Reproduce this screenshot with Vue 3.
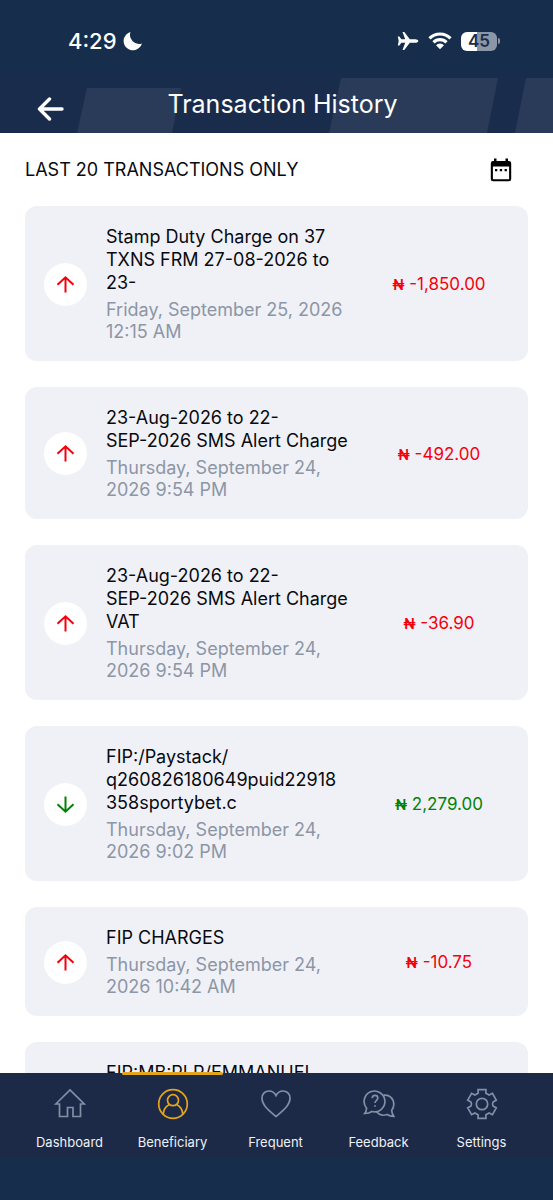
<script setup>
import { ref } from 'vue'

const transactions = [
  { title: 'Stamp Duty Charge on 37\nTXNS FRM 27-08-2026 to\n23-', date: 'Friday, September 25, 2026\n12:15 AM', amount: '-1,850.00', credit: false },
  { title: '23-Aug-2026 to 22-\nSEP-2026 SMS Alert Charge', date: 'Thursday, September 24,\n2026 9:54 PM', amount: '-492.00', credit: false },
  { title: '23-Aug-2026 to 22-\nSEP-2026 SMS Alert Charge\nVAT', date: 'Thursday, September 24,\n2026 9:54 PM', amount: '-36.90', credit: false },
  { title: 'FIP:/Paystack/\nq260826180649puid22918\n358sportybet.c', date: 'Thursday, September 24,\n2026 9:02 PM', amount: '2,279.00', credit: true },
  { title: 'FIP CHARGES', date: 'Thursday, September 24,\n2026 10:42 AM', amount: '-10.75', credit: false },
  { title: 'FIP:MB:PLP/EMMANUEL' }
]

const tabs = [
  {
    label: 'Dashboard',
    paths: ['M1.800 16 16 2 30.200 16H26.500v12.500h-7.500v-9h-5.500v9H5.500V16z']
  },
  {
    label: 'Beneficiary',
    paths: [
      'M16 1.700a14.300 14.300 0 1 0 0 28.600a14.300 14.300 0 1 0 0-28.600z',
      'M16 6.700a5.500 5.500 0 1 0 0 11a5.500 5.500 0 1 0 0-11z',
      'M6.200 26.300C6.600 21 9 18 12.500 16.400M25.800 26.300C25.400 21 23 18 19.500 16.400'
    ]
  },
  {
    label: 'Frequent',
    paths: ['M16 28.500C10 23.500 2 17.500 2 10.300C2 5.800 5.200 3 9 3c3 0 5.500 1.700 7 4.600C17.500 4.700 20 3 23 3c3.800 0 7 2.800 7 7.300C30 17.500 22 23.500 16 28.500z']
  },
  {
    label: 'Feedback',
    paths: [
      'M3.600 20.200A10.400 10.400 0 1 1 8.800 23.500C6.800 24.900 4.400 25.600 1.600 25.500C2.800 24.200 3.500 22.400 3.600 20.200z',
      'M20.600 7.200C26.500 6.300 30.800 10.600 30.800 16.200C30.800 18.500 30 20.600 28.700 22.300C28.800 24.700 29.500 26.800 30.800 28.300C28.200 28.300 26 27.700 24.200 26.500C20 28 15.800 26.600 13.500 23.600',
      'M9.300 10.300C9.300 8.400 10.500 7.400 12 7.400c1.600 0 2.800 1 2.800 2.600c0 2.300-2.800 2.300-2.800 5',
      'M12 17.300v1.500'
    ]
  },
  {
    label: 'Settings',
    paths: [
      'M12.100 1.600H19.900V5.200L23.100 7.100 26.400 5.300 30.300 12.100 27 14.100Q26 16 27 17.900L30.300 19.900 26.400 26.700 23.100 24.900 19.900 26.800V30.400H12.100V26.800L8.900 24.900 5.600 26.700 1.700 19.900 5 17.900Q6 16 5 14.100L1.700 12.100 5.600 5.300 8.900 7.100 12.100 5.200z',
      'M16 10.300a5.700 5.700 0 1 0 0 11.400a5.700 5.700 0 1 0 0-11.400z'
    ]
  }
]

const active = ref('Beneficiary')
</script>

<template>
  <div class="app">
    <header class="top">
      <div class="status">
        <div class="clock">
          <span>4:29</span>
          <svg width="20" height="20" viewBox="0 0 20 20" aria-hidden="true"><path d="M7.500 1A9.300 9.300 0 1 0 18.900 12.400A9 9 0 0 1 7.500 1z" fill="#fff" /></svg>
        </div>
        <div class="signals">
          <svg width="22" height="20" viewBox="0 0 22 20" aria-hidden="true"><path d="M5.500 1h1.800l5.500 7.200h5.400c1.600 0 3.100.8 3.100 1.800s-1.500 1.800-3.100 1.800h-5.400L7.300 19H5.500l2.700-7.200H4.400L2.300 14.500H.8L1.700 10 .8 5.500h1.500l2.100 2.700h3.800z" fill="#fff" /></svg>
          <svg width="24" height="20" viewBox="0 0 24 20" aria-hidden="true">
            <path d="M1.500 7.300a15 15 0 0 1 21 0M5.500 11.300a9.200 9.200 0 0 1 13 0" fill="none" stroke="#fff" stroke-width="3.200" />
            <path d="M8 14.300a5.600 5.600 0 0 1 8 0L12 18.300z" fill="#fff" />
          </svg>
          <div class="battery"><span class="level">45</span><i></i></div>
        </div>
      </div>
      <div class="bar">
        <svg class="shapes" viewBox="0 0 553 57" preserveAspectRatio="none" aria-hidden="true">
          <path d="M87 12h94l-9 45H77zM341 2h157l-11 55H329zM526 2h27v55h-38z" fill="#293b59" />
        </svg>
        <button class="back" type="button" aria-label="Back">
          <svg width="27" height="24" viewBox="0 0 27 24" aria-hidden="true"><path d="M12.500 2 2.500 12l10 10M2.500 12H25" fill="none" stroke="#fff" stroke-width="3.400" stroke-linecap="round" stroke-linejoin="round" /></svg>
        </button>
        <h1>Transaction History</h1>
      </div>
    </header>

    <main class="content">
      <div class="heading">
        <h2>LAST 20 TRANSACTIONS ONLY</h2>
        <button class="calendar" type="button" aria-label="Choose dates">
          <svg width="22" height="24" viewBox="0 0 22 24" aria-hidden="true">
            <path fill-rule="evenodd" d="M4 .5h2.500V3h9V.5H18V3h.8A2.300 2.300 0 0 1 21.200 5.300V21a2.300 2.300 0 0 1-2.300 2.300H3.100A2.300 2.300 0 0 1 .8 21V5.300A2.300 2.300 0 0 1 3.100 3H4zM2.900 8.600v12.600h16.200V8.600z" />
            <path d="M5 11h2.300v2.300H5zM9.800 11h2.300v2.300H9.800zM14.600 11h2.300v2.300h-2.300z" />
          </svg>
        </button>
      </div>

      <ul class="list">
        <li v-for="(item, i) in transactions" :key="i" class="card">
          <span v-if="item.amount" class="badge" :class="{ credit: item.credit }">
            <svg width="19" height="19" viewBox="0 0 19 19" aria-hidden="true">
              <path :d="item.credit ? 'M9.500 1.500v15M1.500 9.200 9.500 16.700l8-7.500' : 'M9.500 17.500V2.500M1.500 9.800 9.500 2.300l8 7.500'" fill="none" stroke="currentColor" stroke-width="2" />
            </svg>
          </span>
          <div class="details">
            <p class="title">{{ item.title }}</p>
            <p v-if="item.date" class="date">{{ item.date }}</p>
          </div>
          <p v-if="item.amount" class="amount" :class="{ credit: item.credit }"><span class="naira">₦</span> {{ item.amount }}</p>
        </li>
      </ul>
    </main>

    <nav class="tabs">
      <button v-for="tab in tabs" :key="tab.label" type="button" class="tab" :class="{ active: tab.label === active }" @click="active = tab.label">
        <svg width="32" height="32" viewBox="0 0 32 32" aria-hidden="true">
          <path v-for="d in tab.paths" :key="d" :d="d" />
        </svg>
        <span>{{ tab.label }}</span>
      </button>
    </nav>
  </div>
</template>

<style>
body {
  margin: 0;
}
</style>

<style scoped>
.app {
  display: flex;
  flex-direction: column;
  height: 100vh;
  background: #fff;
  color: #080a10;
  font-family: Inter, "Liberation Sans", sans-serif;
}
h1, h2, p, ul {
  margin: 0;
  padding: 0;
  font-weight: 400;
}
button {
  padding: 0;
  border: 0;
  background: none;
  color: inherit;
  font: inherit;
  cursor: pointer;
}
svg {
  display: block;
}
.top {
  flex: none;
  background: linear-gradient(#162e4c 60px, #192c4c 84px);
  color: #fff;
}
.status {
  display: flex;
  align-items: center;
  justify-content: space-between;
  height: 46px;
  padding: 18px 53px 12px 68px;
}
.clock, .signals {
  display: flex;
  align-items: center;
}
.clock {
  gap: 6px;
  font-size: 22px;
  font-weight: 500;
}
.signals {
  gap: 9px;
}
.battery {
  display: flex;
  align-items: center;
  gap: 1px;
}
.level {
  width: 36px;
  border-radius: 6px;
  background: linear-gradient(90deg, #fff 45%, #8b97a6 45%);
  color: #162e4c;
  font-size: 17px;
  font-weight: 600;
  line-height: 19px;
  text-align: center;
}
.battery i {
  width: 2px;
  height: 6px;
  border-radius: 0 2px 2px 0;
  background: #8b97a6;
}
.bar {
  position: relative;
  display: grid;
  grid-template-columns: 1fr auto 1fr;
  align-items: center;
  height: 57px;
  padding: 0 25px 0 37px;
}
.shapes {
  position: absolute;
  inset: 0;
  width: 100%;
  height: 100%;
}
.back {
  position: relative;
  justify-self: start;
  padding-top: 8px;
}
.bar h1 {
  position: relative;
  font-size: 25px;
  line-height: 30px;
  padding-bottom: 2px;
}
.content {
  flex: 1;
  min-height: 0;
  padding: 0 25px;
  overflow-y: auto;
  scrollbar-width: none;
}
.heading {
  display: flex;
  align-items: center;
  justify-content: space-between;
  height: 73px;
  padding-right: 16px;
}
.heading h2 {
  font-size: 18px;
}
.list {
  display: grid;
  gap: 26px;
  list-style: none;
}
.card {
  display: grid;
  grid-template-columns: 43px minmax(0, 1fr) 178px;
  column-gap: 19px;
  align-items: center;
  padding: 19px 0 18px 19px;
  border-radius: 12px;
  background: #f0f1f7;
}
.badge {
  display: grid;
  place-items: center;
  width: 43px;
  height: 43px;
  border-radius: 50%;
  background: #fff;
  color: #f6000a;
}
.details {
  grid-column: 2;
  font-size: 18px;
  white-space: pre;
}
.title {
  line-height: 23px;
}
.date {
  margin-top: 5px;
  color: #8c96a5;
  line-height: 22px;
}
.amount {
  color: #f6000a;
  font-size: 17px;
  text-align: center;
}
.naira {
  font-family: Roboto, "Noto Sans", sans-serif;
  font-size: 15px;
  font-weight: 500;
}
.credit {
  color: #008205;
}
.tabs {
  flex: none;
  display: grid;
  grid-template-columns: repeat(5, 1fr);
  padding: 0 20px 43px 18px;
  background: linear-gradient(#1c2a48 84px, #162e4c 84px);
}
.tab {
  position: relative;
  display: flex;
  flex-direction: column;
  align-items: center;
  gap: 14px;
  height: 84px;
  padding-top: 15px;
  color: #eef1f6;
  font-size: 13px;
  line-height: 16px;
}
.tab path {
  fill: none;
  stroke: #8290a6;
  stroke-width: 1.7;
}
.tab.active path {
  stroke: #e5a51b;
}
.tab.active::before {
  content: "";
  position: absolute;
  top: -1px;
  left: 1px;
  right: 1px;
  height: 3px;
  border-radius: 2px;
  background: #e5a51b;
}
</style>
